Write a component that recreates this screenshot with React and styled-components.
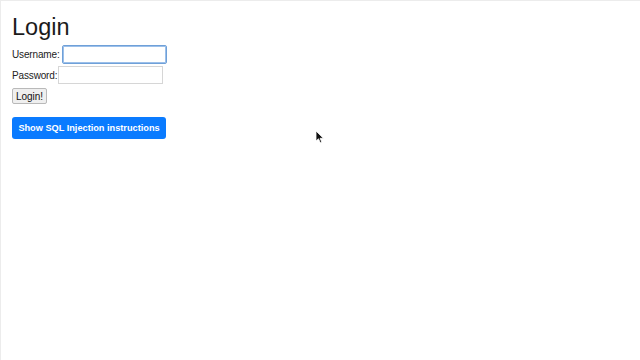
import React from "react";
import styled, { createGlobalStyle } from "styled-components";

const Global = createGlobalStyle`
  html, body { margin: 0; padding: 0; background: #fff; }
  body {
    font-family: "Liberation Sans", Arial, sans-serif;
    color: #212529;
    width: 640px;
    height: 360px;
    overflow: hidden;
  }
  #root { height: 360px; }
`;

const Page = styled.div`
  position: relative;
  box-sizing: border-box;
  height: 360px;
  border-top: 1px solid #ececec;
  border-left: 1px solid #ececec;
  padding: 12px 0 0 11px;
  display: flex;
  flex-direction: column;
  align-items: flex-start;
`;

const Title = styled.h1`
  margin: 0 0 4px 0;
  font-size: 23.5px;
  line-height: 28px;
  font-weight: 400;
  color: #1b1b1b;
`;

const Row = styled.div`
  display: flex;
  align-items: center;
  gap: ${(p) => p.$gap}px;
  margin-bottom: ${(p) => p.$mb}px;
`;

const Label = styled.label`
  font-size: 10px;
  letter-spacing: -0.15px;
  color: #222;
`;

const Input = styled.input`
  box-sizing: border-box;
  width: 105px;
  height: ${(p) => (p.$focused ? 19 : 18)}px;
  margin: 0;
  padding: 0 3px;
  background: #fff;
  border: 1px solid ${(p) => (p.$focused ? "#6fa0d8" : "#d6d6d6")};
  border-radius: ${(p) => (p.$focused ? 2 : 0)}px;
  box-shadow: ${(p) => (p.$focused ? "0 0 0 1px #9cc0ea inset" : "none")};
  outline: none;
  font-family: inherit;
  font-size: 10px;
`;

const PlainButton = styled.button`
  box-sizing: border-box;
  width: 35px;
  height: 16px;
  margin: 0 0 13px 0;
  padding: 0;
  background: #efefef;
  border: 1px solid #b9b9b9;
  border-radius: 2px;
  font-family: inherit;
  font-size: 10px;
  color: #111;
`;

const PrimaryButton = styled.button`
  box-sizing: border-box;
  width: 154px;
  height: 22px;
  margin: 0;
  padding: 0;
  background: #0a7bff;
  border: none;
  border-radius: 3px;
  color: #fff;
  font-family: inherit;
  font-size: 9.2px;
  font-weight: 700;
`;

const Cursor = styled.svg`
  position: absolute;
  left: 314px;
  top: 129px;
`;

export default function App() {
  return (
    <>
      <Global />
      <Page>
        <Title>Login</Title>
        <Row $gap={2} $mb={2}>
          <Label>Username:</Label>
          <Input $focused />
        </Row>
        <Row $gap={1} $mb={4}>
          <Label>Password:</Label>
          <Input type="password" />
        </Row>
        <PlainButton>Login!</PlainButton>
        <PrimaryButton>Show SQL Injection instructions</PrimaryButton>
        <Cursor width="10" height="14" viewBox="0 0 10 14">
          <path d="M1 1 L1 11 L3.5 8.8 L5.3 12.8 L6.8 12.1 L5.1 8.3 L8.4 8.3 Z" fill="#111" stroke="#fff" strokeWidth="0.8" />
        </Cursor>
      </Page>
    </>
  );
}
